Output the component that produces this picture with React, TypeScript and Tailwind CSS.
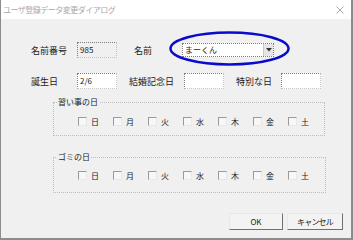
const FONT = { fontFamily: '"Noto Sans CJK JP", "Noto Sans", sans-serif' };

const days = ["日", "月", "火", "水", "木", "金", "土"];

const Field = ({ value = "", w = 40, disabled = false }: { value?: string; w?: number; disabled?: boolean }) => (
  <div
    className={`h-[16px] border border-dotted border-[#7d7d7d] border-r-[#c4c4c4] border-b-[#c4c4c4] flex items-center pl-[2px] text-[8px] leading-none text-[#222] ${
      disabled ? "bg-[#f0f0f0]" : "bg-white"
    }`}
    style={{ width: w }}
  >
    {value}
  </div>
);

const DayGroup = ({ title, h, w, pt }: { title: string; h: string; w: string; pt: string }) => (
  <div className={`relative ml-[22px] border border-dotted border-[#bcbcbc] ${h} ${w}`}>
    <span className="absolute -top-[6px] left-[3px] px-[1px] bg-[#f0f0f0] text-[8px] leading-[10px] text-[#222]">
      {title}
    </span>
    <div className={`flex items-center h-full pl-[24px] ${pt}`}>
      {days.map((d) => (
        <label key={d} className="flex items-center w-[35px] shrink-0">
          <span className="w-[9px] h-[9px] bg-[#f7f7f7] border-t border-l border-[#9a9a9a] border-r-[#e8e8e8] border-b-[#e8e8e8] border-r border-b" />
          <span className="ml-[4px] text-[8px] leading-none text-[#222]">{d}</span>
        </label>
      ))}
    </div>
  </div>
);

export default function App() {
  return (
    <div
      className="relative w-[353px] h-[240px] flex flex-col bg-[#f0f0f0] border-l border-r-2 border-b-2 border-[#8c8c8c] overflow-hidden"
      style={FONT}
    >
      <div className="h-[19px] shrink-0 bg-white flex items-center justify-between pl-[2px] pr-[7px]">
        <span className="text-[8px] tracking-[-0.5px] text-[#a8a8a8] leading-none">ユーザ登録データ変更ダイアログ</span>
        <svg width="8" height="8" viewBox="0 0 8 8">
          <path d="M0.5 0.5 L7.5 7.5 M7.5 0.5 L0.5 7.5" stroke="#a0a0a0" strokeWidth="0.9" fill="none" />
        </svg>
      </div>

      <div className="flex flex-col pl-[30px] pt-[23px]">
        <div className="flex items-center h-[16px]">
          <span className="w-[46px] text-[9px] leading-none text-[#222]">名前番号</span>
          <Field value="985" disabled />
          <span className="ml-[17px] w-[48px] text-[9px] leading-none text-[#222]">名前</span>
          <div className="w-[92px] h-[14px] bg-white border border-dotted border-[#7d7d7d] flex items-center justify-between">
            <span className="pl-[2px] text-[8px] leading-none text-[#222]">まーくん</span>
            <span className="w-[10px] h-full bg-[#e6e6e6] border-l border-[#c8c8c8] flex items-center justify-center">
              <svg width="6" height="4" viewBox="0 0 6 4">
                <path d="M0 0 H6 L3 3.5 Z" fill="#333" />
              </svg>
            </span>
          </div>
        </div>

        <div className="flex items-center h-[16px] mt-[15px]">
          <span className="w-[46px] text-[9px] leading-none text-[#222]">誕生日</span>
          <Field value="2/6" />
          <span className="ml-[12px] w-[55px] text-[9px] leading-none text-[#222]">結婚記念日</span>
          <Field />
          <span className="ml-[12px] w-[45px] text-[9px] leading-none text-[#222]">特別な日</span>
          <Field />
        </div>

        <div className="mt-[13px]">
          <DayGroup title="習い事の日" h="h-[34px]" w="w-[272px]" pt="pt-[5px]" />
        </div>
        <div className="mt-[21px]">
          <DayGroup title="ゴミの日" h="h-[36px]" w="w-[273px]" pt="pt-[1px]" />
        </div>

        <div className="flex justify-end gap-[4px] mt-[20px] pr-[8px]">
          <button className="w-[54px] h-[17px] bg-[#f3f3f3] border border-[#e8e8e8] border-r-[#707070] border-b-[#707070] text-[8px] leading-none text-[#222]">
            OK
          </button>
          <button className="w-[56px] h-[17px] bg-[#f3f3f3] border border-[#e8e8e8] border-r-[#707070] border-b-[#707070] text-[8px] tracking-[-0.8px] leading-none text-[#222]">
            キャンセル
          </button>
        </div>
      </div>

      <svg className="absolute left-[168px] top-[31px]" width="121" height="35" viewBox="0 0 121 35">
        <ellipse cx="60.5" cy="17.5" rx="59" ry="16" fill="none" stroke="#0a0acc" strokeWidth="2.5" />
      </svg>
    </div>
  );
}
